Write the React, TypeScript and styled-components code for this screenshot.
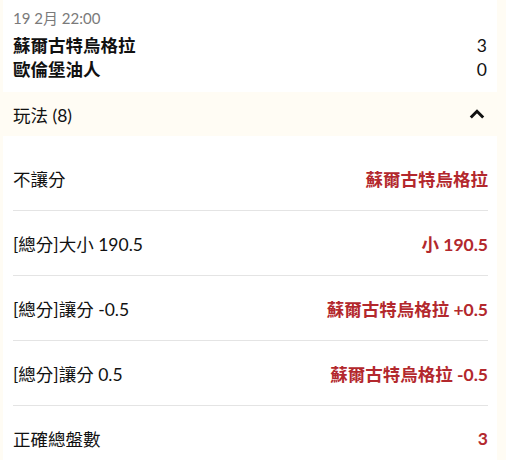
import React from 'react'
import styled, { createGlobalStyle } from 'styled-components'

const GlobalStyle = createGlobalStyle`
  body {
    margin: 0;
    background: #fffcf4;
    font-family: Lato, "Noto Sans CJK TC", sans-serif;
    color: #111;
  }
`

const Page = styled.div`
  padding: 0 9px 0 3px;
`

const MatchCard = styled.div`
  background: #fff;
  padding: 8px 10px 10px;
`

const MatchTime = styled.div`
  font-size: 15px;
  line-height: 20px;
  color: #7a7a7a;
  margin-bottom: 6px;
`

const TeamRow = styled.div`
  display: flex;
  justify-content: space-between;
  align-items: center;
  font-size: 17.5px;
  line-height: 24px;
`

const TeamName = styled.span`
  font-weight: 700;
`

const MarketHeader = styled.div`
  display: flex;
  justify-content: space-between;
  align-items: center;
  height: 44px;
  padding: 0 12px 0 10px;
  font-size: 17.5px;
`

const MarketList = styled.div`
  background: #fff;
  padding: 10px 9px 0 10px;
`

const MarketRow = styled.div`
  display: flex;
  justify-content: space-between;
  align-items: center;
  height: 64px;
  font-size: 17.5px;
  border-bottom: 1px solid #e4e4e4;

  &:last-child {
    border-bottom: none;
  }
`

const Result = styled.span`
  color: #b3282d;
  font-weight: 700;
`

const ChevronUp = () => (
  <svg width="16" height="16" viewBox="0 0 16 16">
    <polyline
      points="1.8,11.5 8,5.3 14.2,11.5"
      fill="none"
      stroke="#111"
      strokeWidth="3"
    />
  </svg>
)

type Market = {
  name: string
  result: string
}

const markets: Market[] = [
  { name: '不讓分', result: '蘇爾古特烏格拉' },
  { name: '[總分]大小 190.5', result: '小 190.5' },
  { name: '[總分]讓分 -0.5', result: '蘇爾古特烏格拉 +0.5' },
  { name: '[總分]讓分 0.5', result: '蘇爾古特烏格拉 -0.5' },
  { name: '正確總盤數', result: '3' },
]

const App = () => (
  <Page>
    <GlobalStyle />
    <MatchCard>
      <MatchTime>19 2月 22:00</MatchTime>
      <TeamRow>
        <TeamName>蘇爾古特烏格拉</TeamName>
        <span>3</span>
      </TeamRow>
      <TeamRow>
        <TeamName>歐倫堡油人</TeamName>
        <span>0</span>
      </TeamRow>
    </MatchCard>
    <MarketHeader>
      <span>玩法 (8)</span>
      <ChevronUp />
    </MarketHeader>
    <MarketList>
      {markets.map((m) => (
        <MarketRow key={m.name}>
          <span>{m.name}</span>
          <Result>{m.result}</Result>
        </MarketRow>
      ))}
    </MarketList>
  </Page>
)

export default App
